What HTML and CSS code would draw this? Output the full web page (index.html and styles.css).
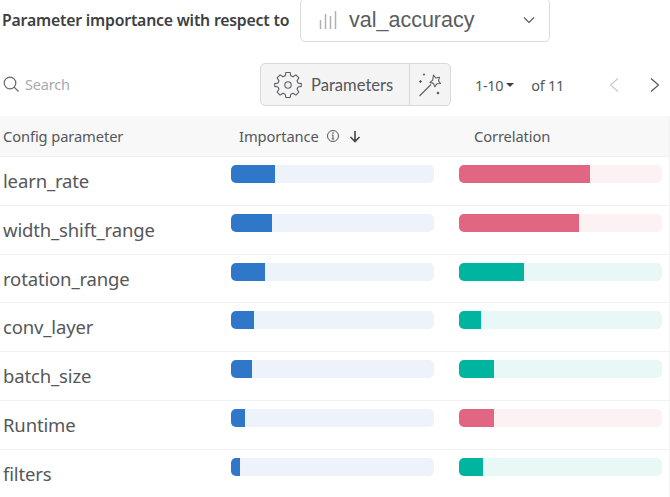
FILE: index.html
```html
<!DOCTYPE html>
<html lang="en">
<head>
    <meta charset="UTF-8">
    <meta name="viewport" content="width=device-width, initial-scale=1.0">
    <title>Parameter importance</title>
    <link rel="stylesheet" href="styles.css">
</head>
<body>

    <div class="title-row">
        <span class="title">Parameter importance with respect to</span>
        <div class="metric-select">
            <svg class="metric-icon" width="18" height="18" viewBox="0 0 18 18" fill="none" stroke="#b0b1b3" stroke-width="1.500">
                <path d="M1.500 18V9M6.500 18V3M11.500 18V5M16.500 18V0"/>
            </svg>
            <span class="metric-name">val_accuracy</span>
            <svg class="chevron" width="14" height="8" viewBox="0 0 14 8" fill="none" stroke="#555" stroke-width="1.1">
                <path d="M2 1.500L7 6.500L12 1.500"/>
            </svg>
        </div>
    </div>

    <div class="tool-row">
        <div class="search">
            <svg width="18" height="18" viewBox="0 0 18 18" fill="none" stroke="#666" stroke-width="1.2">
                <circle cx="8" cy="8" r="5.800"/>
                <path d="M12.200 12.200L16.500 16.500"/>
            </svg>
            <span>Search</span>
        </div>
        <div class="button-group">
            <div class="params-btn">
                <svg width="28" height="28" viewBox="0 0 28 28" fill="none" stroke="#5c5e61" stroke-width="1.1" stroke-linejoin="round">
                    <circle cx="14" cy="14" r="3.200"/>
                    <path d="M11.800 1.500h4.400l.6 3.300 2.300 1 2.800-1.900 3 3-1.900 2.800 1 2.300 3.300.6v2.800l-3.300.6-1 2.300 1.900 2.800-3 3-2.800-1.900-2.300 1-.6 3.300h-4.400l-.6-3.300-2.300-1-2.800 1.900-3-3 1.900-2.800-1-2.300-3.300-.6v-2.800l3.300-.6 1-2.300-1.900-2.800 3-3 2.800 1.900 2.300-1z"/>
                </svg>
                <span>Parameters</span>
            </div>
            <div class="magic-btn">
                <svg width="26" height="26" viewBox="0 0 26 26" fill="none" stroke="#5c5e61" stroke-width="1.1" stroke-linejoin="round">
                    <path d="M2.500 24L14 12.500"/>
                    <path d="M16.500 3l2.200 3 3.800-.8-1 3.600 2 2.700-3.600.2-2 3-1.400-3.300-3.500-1 2.700-2.300z"/>
                    <circle cx="7" cy="2.500" r=".5" fill="#5c5e61"/>
                    <path d="M2 9.500h3M3.500 8v3"/>
                    <circle cx="21" cy="21" r=".8" fill="#5c5e61"/>
                </svg>
            </div>
        </div>
        <div class="pager">
            <span class="page-size">1-10</span>
            <span class="caret"></span>
            <span class="page-total">of 11</span>
            <svg class="page-prev" width="12" height="16" viewBox="0 0 12 16" fill="none" stroke="#c9cacc" stroke-width="1.2">
                <path d="M10 1.500L2.500 8L10 14.500"/>
            </svg>
            <svg class="page-next" width="12" height="16" viewBox="0 0 12 16" fill="none" stroke="#555" stroke-width="1.2">
                <path d="M2 1.500L9.500 8L2 14.500"/>
            </svg>
        </div>
    </div>

    <div class="table">
        <div class="table-head">
            <div class="col-name">Config parameter</div>
            <div class="col-imp head-imp">
                <span>Importance</span>
                <svg width="14" height="14" viewBox="0 0 14 14" fill="none" stroke="#555" stroke-width="1">
                    <circle cx="7" cy="7" r="5.500"/>
                    <path d="M7 6v4M5.800 10h2.400M5.800 6H7"/>
                    <circle cx="7" cy="4" r=".4"/>
                </svg>
                <svg class="sort-arrow" width="12" height="13" viewBox="0 0 12 13" fill="none" stroke="#444" stroke-width="1.600">
                    <path d="M6 1v10.500M1.500 7L6 11.500L10.500 7"/>
                </svg>
            </div>
            <div class="col-corr">Correlation</div>
        </div>

        <div class="row">
            <div class="param">learn_rate</div>
            <div class="track track-imp"><div class="fill fill-imp" style="width:44px"></div></div>
            <div class="track track-neg"><div class="fill fill-neg" style="width:131px"></div></div>
        </div>
        <div class="row">
            <div class="param">width_shift_range</div>
            <div class="track track-imp"><div class="fill fill-imp" style="width:41px"></div></div>
            <div class="track track-neg"><div class="fill fill-neg" style="width:120px"></div></div>
        </div>
        <div class="row">
            <div class="param">rotation_range</div>
            <div class="track track-imp"><div class="fill fill-imp" style="width:34px"></div></div>
            <div class="track track-pos"><div class="fill fill-pos" style="width:65px"></div></div>
        </div>
        <div class="row">
            <div class="param">conv_layer</div>
            <div class="track track-imp"><div class="fill fill-imp" style="width:23px"></div></div>
            <div class="track track-pos"><div class="fill fill-pos" style="width:22px"></div></div>
        </div>
        <div class="row">
            <div class="param">batch_size</div>
            <div class="track track-imp"><div class="fill fill-imp" style="width:21px"></div></div>
            <div class="track track-pos"><div class="fill fill-pos" style="width:35px"></div></div>
        </div>
        <div class="row">
            <div class="param">Runtime</div>
            <div class="track track-imp"><div class="fill fill-imp" style="width:14px"></div></div>
            <div class="track track-neg"><div class="fill fill-neg" style="width:35px"></div></div>
        </div>
        <div class="row">
            <div class="param">filters</div>
            <div class="track track-imp"><div class="fill fill-imp" style="width:9px"></div></div>
            <div class="track track-pos"><div class="fill fill-pos" style="width:24px"></div></div>
        </div>
    </div>

</body>
</html>
```

FILE: styles.css
```css
body {
    margin: 0;
    height: 497px;
    overflow: hidden;
    background: #fff;
    font-family: "Noto Sans", Arial, sans-serif;
    color: #4f5154;
}

.title-row {
    display: flex;
    align-items: center;
    height: 44px;
    margin-top: -2px;
}

.title {
    width: 300px;
    padding-left: 2px;
    box-sizing: border-box;
    font-size: 15.800px;
    font-weight: 600;
    letter-spacing: -0.2px;
    color: #3d3f42;
    white-space: nowrap;
}

.metric-select {
    display: flex;
    align-items: center;
    width: 250px;
    height: 44px;
    box-sizing: border-box;
    padding-left: 18px;
    border: 1px solid #dcdddf;
    border-radius: 5px;
}

.metric-name {
    margin-left: 12px;
    font-family: "Liberation Sans", Arial, sans-serif;
    font-size: 21.500px;
    color: #5a5c5f;
}

.chevron {
    margin-left: auto;
    margin-right: 13px;
}

.tool-row {
    display: flex;
    align-items: center;
    height: 43px;
    margin-top: 21px;
}

.search {
    display: flex;
    align-items: center;
    gap: 5px;
    width: 260px;
    margin-top: -1px;
    padding-left: 2px;
    box-sizing: border-box;
    font-size: 14.500px;
    letter-spacing: -0.2px;
    color: #a8aaad;
}

.button-group {
    display: flex;
    width: 191px;
    height: 43px;
    box-sizing: border-box;
    border: 1px solid #d8d9db;
    border-radius: 5px;
    background: #f4f4f5;
}

.params-btn {
    display: flex;
    align-items: center;
    gap: 9px;
    width: 149px;
    box-sizing: border-box;
    padding-left: 13px;
    border-right: 1px solid #d8d9db;
    font-family: Lato, sans-serif;
    font-size: 16.600px;
    color: #55575a;
}

.magic-btn {
    display: flex;
    align-items: center;
    justify-content: center;
    flex: 1;
}

.pager {
    display: flex;
    align-items: center;
    flex: 1;
    padding-left: 24px;
    font-size: 14.500px;
    letter-spacing: -0.3px;
    color: #55575a;
}

.caret {
    width: 0;
    height: 0;
    margin-left: 3px;
    border-left: 4px solid transparent;
    border-right: 4px solid transparent;
    border-top: 4px solid #3d3f42;
}

.page-total {
    margin-left: 17px;
}

.page-prev {
    margin-left: 44px;
}

.page-next {
    margin-left: 29px;
}

.table {
    margin-top: 10px;
    border-right: 1px solid #f3f3f4;
}

.table-head {
    display: flex;
    align-items: center;
    height: 40px;
    background: #f8f8f8;
    font-size: 14.700px;
    letter-spacing: -0.1px;
    color: #55575a;
}

.col-name {
    width: 239px;
    padding-left: 3px;
    box-sizing: border-box;
}

.col-imp {
    width: 235px;
}

.head-imp {
    display: flex;
    align-items: center;
    gap: 7px;
}

.sort-arrow {
    margin-left: 2px;
}

.row {
    display: flex;
    align-items: flex-start;
    height: 48.830px;
    box-sizing: border-box;
    border-top: 1px solid #f1f1f2;
    padding-top: 8px;
}

.param {
    width: 231px;
    padding: 3px 0 0 3px;
    box-sizing: border-box;
    font-size: 18.500px;
    letter-spacing: -0.15px;
    line-height: 26px;
    color: #55575a;
}

.track {
    width: 203px;
    height: 18px;
    border-radius: 5px;
    overflow: hidden;
}

.track-imp {
    margin-right: 25px;
    background: #eef2fa;
}

.track-neg {
    background: #fcf2f4;
}

.track-pos {
    background: #e8f8f6;
}

.fill {
    height: 100%;
}

.fill-imp {
    background: #2f78c9;
}

.fill-neg {
    background: #e06681;
}

.fill-pos {
    background: #00b5a0;
}
```
